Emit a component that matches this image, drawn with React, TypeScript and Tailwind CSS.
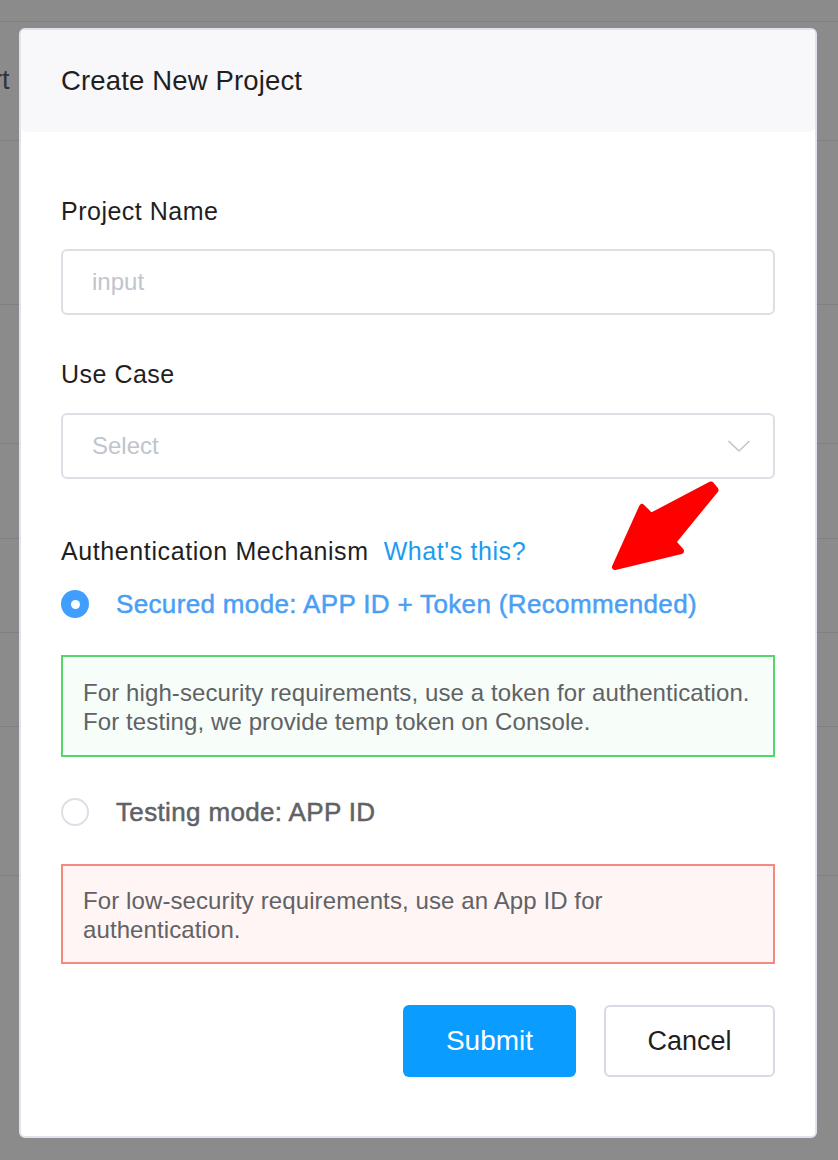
import React from "react";

export default function App() {
  const rows = [
    "h-[22px]",
    "h-[119px]",
    "h-[164px]",
    "h-[139px]",
    "h-[95px]",
    "h-[94px]",
    "h-[94px]",
    "h-[149px]",
  ];
  return (
    <div className="relative w-[838px] h-[1160px] overflow-hidden bg-[#8b8b8b] font-['Liberation_Sans',Arial,sans-serif]">
      {/* background page (under overlay) */}
      <div className="flex flex-col">
        {rows.map((h, i) => (
          <div key={i} className={`${h} border-b border-[#7e7e83] flex items-center`}>
            {i === 1 ? (
              <span className="ml-[-7px] mt-[-2px] text-[27px] leading-[32px] text-[#30343c]">rt</span>
            ) : null}
          </div>
        ))}
      </div>

      {/* modal */}
      <div className="absolute left-[19px] top-[28px] w-[798px] h-[1110px] bg-white rounded-[6px] border-2 border-[#e3e2ec] flex flex-col">
        <div className="h-[102px] bg-[#f8f8fa] rounded-[6px] flex items-center pl-[40px]">
          <span className="text-[27.5px] leading-[32px] text-[#1f1f1f] tracking-[0.15px]">Create New Project</span>
        </div>

        <div className="px-[40px] pt-[64px] flex flex-col">
          <div className="text-[25px] leading-[30px] tracking-[0.5px] text-[#1f1f1f]">Project Name</div>
          <div className="mt-[23px] h-[66px] rounded-[6px] border-2 border-[#dcdfe6] flex items-center pl-[29px]">
            <span className="text-[24px] text-[#c0c4cc]">input</span>
          </div>

          <div className="mt-[44px] text-[25px] leading-[30px] tracking-[0.5px] text-[#1f1f1f]">Use Case</div>
          <div className="mt-[24px] h-[66px] rounded-[6px] border-2 border-[#dcdfe6] flex items-center justify-between pl-[29px] pr-[22px]">
            <span className="text-[24px] text-[#c0c4cc]">Select</span>
            <svg width="24" height="14" viewBox="0 0 24 14" fill="none">
              <polyline points="1.5,2 12,12 22.5,2" stroke="#c0c4cc" strokeWidth="1.6" />
            </svg>
          </div>

          <div className="mt-[57px] flex items-center gap-[15px] text-[25px] leading-[30px] tracking-[0.6px]">
            <span className="text-[#1f1f1f]">Authentication Mechanism</span>
            <span className="text-[#1a9cf0]">What's this?</span>
          </div>

          <div className="mt-[23px] h-[30px] flex items-center gap-[27px]">
            <div className="w-[28px] h-[28px] rounded-full bg-[#409eff] flex items-center justify-center">
              <div className="w-[9px] h-[9px] rounded-full bg-white" />
            </div>
            <span className="text-[26px] leading-[30px] tracking-[0.35px] text-[#4a9ff5] [-webkit-text-stroke:0.5px_#4a9ff5]">
              Secured mode: APP ID + Token (Recommended)
            </span>
          </div>

          <div className="mt-[36px] h-[102px] border-2 border-[#55d66b] bg-[#f7fdf8] pl-[20px] pt-[21px]">
            <p className="text-[24px] leading-[29px] tracking-[0.1px] text-[#606266] whitespace-nowrap">
              For high-security requirements, use a token for authentication.
              <br />
              For testing, we provide temp token on Console.
            </p>
          </div>

          <div className="mt-[40px] h-[30px] flex items-center gap-[27px]">
            <div className="w-[28px] h-[28px] rounded-full border-2 border-[#dcdfe6] bg-white" />
            <span className="text-[26px] leading-[30px] tracking-[0.35px] text-[#606266] [-webkit-text-stroke:0.5px_#606266]">
              Testing mode: APP ID
            </span>
          </div>

          <div className="mt-[37px] h-[100px] border-2 border-[#f5887f] bg-[#fff5f4] pl-[20px] pt-[20px]">
            <p className="text-[24px] leading-[29px] tracking-[0.1px] text-[#606266] whitespace-nowrap">
              For low-security requirements, use an App ID for
              <br />
              authentication.
            </p>
          </div>

          <div className="mt-[41px] flex justify-end gap-[28px]">
            <button className="w-[173px] h-[72px] rounded-[6px] bg-[#0a9dff] text-white text-[28px]">Submit</button>
            <button className="w-[171px] h-[72px] rounded-[6px] border-2 border-[#d9d7e8] bg-white text-[27px] text-[#1f1f1f]">
              Cancel
            </button>
          </div>
        </div>
      </div>

      {/* red annotation arrow */}
      <svg className="absolute left-0 top-0 pointer-events-none" width="838" height="1160" viewBox="0 0 838 1160">
        <polygon
          points="711,484.5 651,516 642,507 615,567 681,551 673,542 715.5,490"
          fill="#ff0000"
          stroke="#ff0000"
          strokeWidth="6"
          strokeLinejoin="round"
        />
      </svg>
    </div>
  );
}
